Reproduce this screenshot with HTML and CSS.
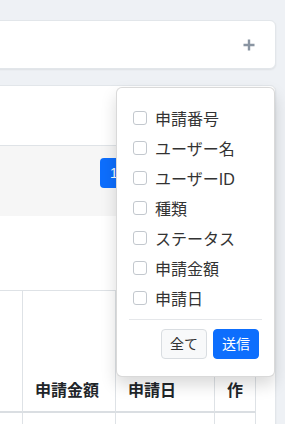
FILE: index.html
```html
<!DOCTYPE html>
<html lang="ja">
<head>
<meta charset="utf-8">
<title>申請一覧</title>
<link rel="stylesheet" href="styles.css">
</head>
<body>
<div class="page">
  <div class="card card-top">
    <svg class="plus" width="12" height="12" viewBox="0 0 12 12" aria-hidden="true">
      <path d="M6 0.5V11.5M0.5 6H11.5" stroke="#8a95a2" stroke-width="2.4" fill="none"/>
    </svg>
  </div>

  <div class="card card-main">
    <div class="card-head"></div>
    <div class="toolbar">
      <button class="btn-page">1</button>
    </div>
    <div class="spacer"></div>
    <table class="grid">
      <thead>
        <tr>
          <th class="c0"></th>
          <th class="c1">申請金額</th>
          <th class="c2">申請日</th>
          <th class="c3">操作</th>
        </tr>
      </thead>
      <tbody>
        <tr>
          <td class="c0"></td>
          <td class="c1"></td>
          <td class="c2"></td>
          <td class="c3"></td>
        </tr>
      </tbody>
    </table>
  </div>

  <div class="dropdown">
    <ul class="menu">
      <li class="item"><input type="checkbox" class="check"><span>申請番号</span></li>
      <li class="item"><input type="checkbox" class="check"><span>ユーザー名</span></li>
      <li class="item"><input type="checkbox" class="check"><span>ユーザーID</span></li>
      <li class="item"><input type="checkbox" class="check"><span>種類</span></li>
      <li class="item"><input type="checkbox" class="check"><span>ステータス</span></li>
      <li class="item"><input type="checkbox" class="check"><span>申請金額</span></li>
      <li class="item"><input type="checkbox" class="check"><span>申請日</span></li>
    </ul>
    <div class="divider"></div>
    <div class="actions">
      <button class="btn btn-light">全て</button>
      <button class="btn btn-primary">送信</button>
    </div>
  </div>
</div>
</body>
</html>
```

FILE: styles.css
```css
* { box-sizing: border-box; }

html, body {
  margin: 0;
  padding: 0;
  background: #eef1f5;
  font-family: "Liberation Sans", "Noto Sans CJK JP", sans-serif;
  color: #212529;
  overflow: hidden;
}

.page {
  position: relative;
  padding: 20px 9px 0 0;
  height: 424px;
  overflow: hidden;
}

.card {
  margin-left: -40px;
  background: #fff;
  border: 1px solid #e2e6ea;
  border-radius: 6px;
  box-shadow: 0 1px 2px rgba(0, 0, 0, 0.07);
}

.card-top {
  height: 49px;
  display: flex;
  align-items: center;
  justify-content: flex-end;
  padding-right: 20px;
}

.plus { display: block; }

.card-main {
  margin-top: 16px;
  overflow: hidden;
}

.card-head {
  height: 60px;
  border-bottom: 1px solid #dfe3e7;
}

.toolbar {
  height: 70px;
  background: #f6f6f6;
  display: flex;
  align-items: flex-start;
  padding: 12px 0 0 139px;
}

.btn-page {
  height: 30px;
  width: 30px;
  padding: 0 0 0 10px;
  text-align: left;
  border: none;
  border-radius: 4px;
  background: #0d6efd;
  color: #fff;
  font: 14px/30px "Liberation Sans", sans-serif;
}

.spacer { height: 74px; }

.grid {
  border-collapse: separate;
  border-spacing: 0;
  table-layout: fixed;
  width: 295px;
  font-size: 16px;
  line-height: 24px;
}

.grid th, .grid td {
  border-right: 1px solid #dee2e6;
  padding: 8px 12px;
  text-align: left;
  vertical-align: bottom;
}

.grid th {
  height: 123px;
  border-top: 1px solid #dee2e6;
  border-bottom: 2px solid #dadee2;
  font-weight: bold;
  color: #212529;
}

.grid td { height: 40px; }

.grid .c0 { width: 62px; }
.grid .c1 { width: 93px; }
.grid .c2 { width: 99px; }
.grid .c3 { width: 41px; }

.dropdown {
  position: absolute;
  left: 116px;
  top: 87px;
  width: 159px;
  background: #fff;
  border: 1px solid rgba(0, 0, 0, 0.15);
  border-radius: 6px;
  box-shadow: 0 8px 16px rgba(0, 0, 0, 0.15);
  padding: 15px 12px 17px;
}

.menu {
  list-style: none;
  margin: 0;
  padding: 0;
}

.item {
  height: 30px;
  display: flex;
  align-items: center;
  padding-left: 4px;
  font-size: 16px;
  color: #333;
  white-space: nowrap;
}

.check {
  appearance: none;
  -webkit-appearance: none;
  margin: 0 8px 0 0;
  width: 14px;
  height: 14px;
  border: 1px solid #c3c8ce;
  border-radius: 3px;
  background: #fff;
  flex: none;
}

.divider {
  margin: 6px 0 9px;
  height: 1px;
  background: #e5e7ea;
}

.actions {
  display: flex;
  justify-content: flex-end;
  gap: 6px;
  padding-right: 3px;
}

.btn {
  height: 30px;
  width: 46px;
  padding: 0;
  border-radius: 4px;
  font: 14px/28px "Liberation Sans", "Noto Sans CJK JP", sans-serif;
  text-align: center;
}

.btn-light {
  background: #f8f9fa;
  border: 1px solid #d9dde1;
  color: #333;
}

.btn-primary {
  background: #0d6efd;
  border: 1px solid #0d6efd;
  color: #fff;
}
```
